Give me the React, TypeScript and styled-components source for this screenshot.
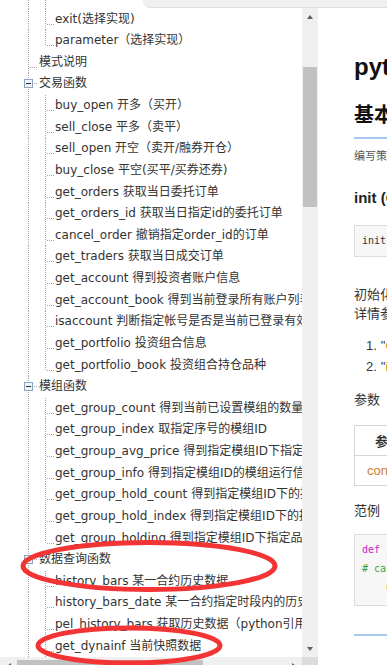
import React from "react";
import styled, { createGlobalStyle } from "styled-components";

const ROW_H = 21.634;
const LINE = "#a6a6a6";

type TreeNode = { label: string; level: 1 | 2; group?: boolean; last?: boolean };

const nodes: TreeNode[] = [
  { label: "exit(选择实现)", level: 2 },
  { label: "parameter（选择实现）", level: 2, last: true },
  { label: "模式说明", level: 1 },
  { label: "交易函数", level: 1, group: true },
  { label: "buy_open 开多（买开）", level: 2 },
  { label: "sell_close 平多（卖平）", level: 2 },
  { label: "sell_open 开空（卖开/融券开仓）", level: 2 },
  { label: "buy_close 平空(买平/买券还券)", level: 2 },
  { label: "get_orders 获取当日委托订单", level: 2 },
  { label: "get_orders_id 获取当日指定id的委托订单", level: 2 },
  { label: "cancel_order 撤销指定order_id的订单", level: 2 },
  { label: "get_traders 获取当日成交订单", level: 2 },
  { label: "get_account 得到投资者账户信息", level: 2 },
  { label: "get_account_book 得到当前登录所有账户列表", level: 2 },
  { label: "isaccount 判断指定帐号是否是当前已登录有效账号", level: 2 },
  { label: "get_portfolio 投资组合信息", level: 2 },
  { label: "get_portfolio_book 投资组合持仓品种", level: 2, last: true },
  { label: "模组函数", level: 1, group: true },
  { label: "get_group_count 得到当前已设置模组的数量", level: 2 },
  { label: "get_group_index 取指定序号的模组ID", level: 2 },
  { label: "get_group_avg_price 得到指定模组ID下指定品种的持仓均价", level: 2 },
  { label: "get_group_info 得到指定模组ID的模组运行信息", level: 2 },
  { label: "get_group_hold_count 得到指定模组ID下的持仓品种数", level: 2 },
  { label: "get_group_hold_index 得到指定模组ID下的持仓品种", level: 2 },
  { label: "get_group_holding 得到指定模组ID下指定品种的持仓", level: 2, last: true },
  { label: "数据查询函数", level: 1, group: true },
  { label: "history_bars 某一合约历史数据", level: 2 },
  { label: "history_bars_date 某一合约指定时段内的历史数据", level: 2 },
  { label: "pel_history_bars 获取历史数据（python引用）", level: 2 },
  { label: "get_dynainf 当前快照数据", level: 2 },
];

const GlobalStyle = createGlobalStyle`
  html, body { margin: 0; padding: 0; background: #fff; }
  body { font-family: "DejaVu Sans", "Noto Sans CJK SC", sans-serif; }
  #root { width: 387px; height: 665px; }
`;

const Frame = styled.div`
  position: relative;
  width: 387px;
  height: 665px;
  overflow: hidden;
  display: flex;
  background: #fff;
`;

const LeftPane = styled.div`
  flex: 0 0 318px;
  width: 318px;
  height: 665px;
  display: flex;
  flex-direction: column;
  overflow: hidden;
`;

const TreeArea = styled.div`
  flex: 0 0 657px;
  height: 657px;
  display: flex;
`;

const TreeViewport = styled.div`
  flex: 1;
  min-width: 0;
  overflow: hidden;
  background: #fff;
`;

const TreeList = styled.ul`
  list-style: none;
  margin: 0;
  padding: 0;
`;

const Stub = styled.li`
  height: 8.5px;
  display: flex;
`;

const Row = styled.li`
  height: ${ROW_H}px;
  display: flex;
  align-items: flex-start;
  white-space: nowrap;
`;

const LineArt = styled.svg`
  flex: none;
  display: block;
`;

const Label = styled.span`
  font-size: 12px;
  line-height: ${ROW_H}px;
  color: #333;
  white-space: nowrap;
`;

const VScroll = styled.div`
  flex: 0 0 16px;
  width: 16px;
  background: #f0f0f0;
  display: flex;
  flex-direction: column;
  padding-top: 8px;
  box-sizing: border-box;
`;

const ArrowBtn = styled.div`
  flex: 0 0 17px;
  height: 17px;
  display: flex;
  align-items: center;
  justify-content: center;
`;

const HArrowBtn = styled(ArrowBtn)`
  flex: 0 0 17px;
  width: 17px;
`;

const Tri = styled.div<{ $dir: "up" | "down" | "left" | "right" }>`
  width: 0;
  height: 0;
  ${(p) =>
    p.$dir === "up"
      ? "border-left: 3.5px solid transparent; border-right: 3.5px solid transparent; border-bottom: 4px solid #606060;"
      : p.$dir === "down"
      ? "border-left: 3.5px solid transparent; border-right: 3.5px solid transparent; border-top: 4px solid #606060;"
      : p.$dir === "left"
      ? "border-top: 3.5px solid transparent; border-bottom: 3.5px solid transparent; border-right: 4px solid #606060;"
      : "border-top: 3.5px solid transparent; border-bottom: 3.5px solid transparent; border-left: 4px solid #606060;"}
`;

const VTrack = styled.div`
  flex: 1;
`;

const VThumb = styled.div`
  margin: 42px 0 0 1px;
  width: 14px;
  height: 140px;
  background: #c1c1c1;
`;

const BottomBar = styled.div`
  flex: 0 0 17px;
  height: 17px;
  display: flex;
`;

const HScroll = styled.div`
  flex: 0 0 302px;
  width: 302px;
  background: #f0f0f0;
  display: flex;
`;

const HTrack = styled.div`
  flex: 1;
`;

const HThumb = styled.div`
  margin-top: 3px;
  width: 186px;
  height: 14px;
  background: #c1c1c1;
`;

const Corner = styled.div`
  flex: 1;
  background: #dcdcdc;
`;

const TopBand = styled.div`
  position: absolute;
  top: 0;
  left: 143px;
  right: 0;
  height: 7px;
  background: #f0f0f0;
  border-bottom: 1px solid #dddddd;
  border-bottom-left-radius: 8px;
`;

const RightPane = styled.div`
  flex: 1;
  min-width: 0;
  overflow: hidden;
  padding: 51.7px 0 0 36px;
  font-family: "Liberation Sans", "Noto Sans CJK SC", sans-serif;
  color: #333;
`;

const Doc = styled.div`
  width: 620px;
  white-space: nowrap;
`;

const H1 = styled.h1`
  margin: 0;
  font-size: 24px;
  line-height: 30px;
  font-weight: bold;
  color: #111;
`;

const H2 = styled.h2`
  margin: 19.8px 0 0;
  font-size: 20px;
  line-height: 28px;
  font-weight: bold;
  color: #111;
  padding-bottom: 8px;
  border-bottom: 2px solid #a6c9f0;
`;

const Lead = styled.p`
  margin: 6.7px 0 0;
  font-size: 11px;
  line-height: 20px;
  color: #555;
`;

const H3 = styled.h3`
  margin: 19.8px 0 0;
  font-size: 15px;
  line-height: 24px;
  font-weight: bold;
  color: #222;
`;

const CodeBox = styled.pre<{ $mt: number }>`
  margin: ${(p) => p.$mt}px 0 0;
  padding: 6px 7px;
  border: 1px solid #dcdcdc;
  background: #f7f7f7;
  font-family: "DejaVu Sans Mono", "Liberation Mono", monospace;
  font-size: 10px;
  line-height: 18px;
  color: #333;
`;

const CodeBlock = styled(CodeBox)`
  padding: 5px 7px 8px;
  line-height: 19px;
`;

const CodeLine = styled.div<{ $indent?: number }>`
  padding-left: ${(p) => p.$indent ?? 0}px;
  height: 19px;
`;

const Kw = styled.span`
  color: #c71fc7;
`;
const Fn = styled.span`
  color: #2a2ab8;
`;
const Cm = styled.span`
  color: #3fa33f;
`;
const Or = styled.span`
  color: #cf7d2c;
`;

const Para = styled.p<{ $mt: number }>`
  margin: ${(p) => p.$mt}px 0 0;
  font-size: 13px;
  line-height: 19px;
  color: #333;
`;

const Label2 = styled.p<{ $mt: number }>`
  margin: ${(p) => p.$mt}px 0 0;
  font-size: 13px;
  line-height: 20px;
  color: #333;
`;

const List = styled.ol`
  margin: 12.7px 0 0;
  padding: 0;
  list-style: none;
  font-size: 13px;
  line-height: 21px;
`;

const Item = styled.li`
  display: flex;
  padding-left: 12px;
`;

const Num = styled.span`
  color: #333;
  margin-right: 4px;
`;

const Table = styled.table`
  margin-top: 14.6px;
  border-collapse: collapse;
  font-size: 13px;
  color: #333;
`;

const Th = styled.th`
  height: 29px;
  padding: 0 12px;
  border: 1px solid #d6d6d6;
  font-weight: bold;
  text-align: center;
`;

const Td = styled.td`
  height: 29px;
  padding: 0 12px;
  border: 1px solid #d6d6d6;
  text-align: left;
`;

const Rule = styled.div`
  margin-top: 28px;
  height: 2px;
  background: #a6c9f0;
`;

const Marks = styled.svg`
  position: absolute;
  left: 0;
  top: 0;
  pointer-events: none;
`;

function Connector({ node }: { node: TreeNode }) {
  const w = node.level === 1 ? 39 : 55;
  const h = ROW_H;
  const hy = 15.5;
  const cy = 10.5;
  const dash = { stroke: LINE, strokeDasharray: "1 1", strokeWidth: 1 };
  return (
    <LineArt width={w} height={h} viewBox={`0 0 ${w} ${h}`} shapeRendering="crispEdges">
      <line x1={28.5} y1={0} x2={28.5} y2={h} {...dash} />
      {node.level === 2 && (
        <>
          <line x1={45.5} y1={0} x2={45.5} y2={node.last ? hy : h} {...dash} />
          <line x1={47} y1={hy} x2={54} y2={hy} {...dash} />
        </>
      )}
      {node.level === 1 && !node.group && <line x1={30} y1={hy} x2={38} y2={hy} {...dash} />}
      {node.group && (
        <>
          <rect x={24.5} y={cy - 4} width={8} height={8} fill="#eef4fb" stroke="#8ba2c0" />
          <line x1={26} y1={cy} x2={31} y2={cy} stroke="#2b2b2b" strokeWidth={1} />
          <line x1={34} y1={cy} x2={38} y2={cy} {...dash} />
        </>
      )}
    </LineArt>
  );
}

function Tree() {
  return (
    <TreeList>
      <Stub>
        <LineArt width={55} height={8.5} viewBox="0 0 55 8.5" shapeRendering="crispEdges">
          <line x1={28.5} y1={0} x2={28.5} y2={8.5} stroke={LINE} strokeDasharray="1 1" />
          <line x1={45.5} y1={0} x2={45.5} y2={8.5} stroke={LINE} strokeDasharray="1 1" />
        </LineArt>
      </Stub>
      {nodes.map((n, i) => (
        <Row key={i}>
          <Connector node={n} />
          <Label>{n.label}</Label>
        </Row>
      ))}
    </TreeList>
  );
}

export default function App() {
  return (
    <>
      <GlobalStyle />
      <Frame>
        <LeftPane>
          <TreeArea>
            <TreeViewport>
              <Tree />
            </TreeViewport>
            <VScroll>
              <ArrowBtn>
                <Tri $dir="up" />
              </ArrowBtn>
              <VTrack>
                <VThumb />
              </VTrack>
              <ArrowBtn>
                <Tri $dir="down" />
              </ArrowBtn>
            </VScroll>
          </TreeArea>
          <BottomBar>
            <HScroll>
              <HArrowBtn>
                <Tri $dir="left" />
              </HArrowBtn>
              <HTrack>
                <HThumb />
              </HTrack>
              <HArrowBtn>
                <Tri $dir="right" />
              </HArrowBtn>
            </HScroll>
            <Corner />
          </BottomBar>
        </LeftPane>
        <RightPane>
          <Doc>
            <H1>python API 说明</H1>
            <H2>基本函数</H2>
            <Lead>编写策略时需要实现以下基本函数，系统在运行时自动调用。</Lead>
            <H3>init (ContextInfo)</H3>
            <CodeBox $mt={14.8}>init(ContextInfo)</CodeBox>
            <Para $mt={28}>
              初始化函数，在策略开始运行时调用一次
              <br />
              详情参见以下说明
            </Para>
            <List>
              <Item>
                <Num>1.</Num>&quot;<Or>ContextInfo</Or>&quot; 为全局对象
              </Item>
              <Item>
                <Num>2.</Num>&quot;<Or>init</Or>&quot; 只在启动时执行
              </Item>
            </List>
            <Label2 $mt={12.7}>参数</Label2>
            <Table>
              <thead>
                <tr>
                  <Th>参数</Th>
                  <Th>类型</Th>
                  <Th>说明</Th>
                </tr>
              </thead>
              <tbody>
                <tr>
                  <Td>
                    <Or>context</Or>
                  </Td>
                  <Td>object</Td>
                  <Td>策略运行环境对象</Td>
                </tr>
              </tbody>
            </Table>
            <Label2 $mt={15.4}>范例</Label2>
            <CodeBlock $mt={12.6}>
              <CodeLine>
                <Kw>def</Kw> <Fn>init</Fn>(ContextInfo):
              </CodeLine>
              <CodeLine>
                <Cm># case: set universe</Cm>
              </CodeLine>
              <CodeLine $indent={24}>
                <Or>ContextInfo</Or>.set_universe([&apos;600000.SH&apos;])
              </CodeLine>
            </CodeBlock>
            <Rule />
          </Doc>
        </RightPane>
        <TopBand />
        <Marks width={387} height={665} viewBox="0 0 387 665">
          <ellipse cx={149} cy={566} rx={126} ry={23.5} fill="none" stroke="#f23434" strokeWidth={5} />
          <ellipse cx={129} cy={645.5} rx={91} ry={17.5} fill="none" stroke="#f23434" strokeWidth={5} />
        </Marks>
      </Frame>
    </>
  );
}
